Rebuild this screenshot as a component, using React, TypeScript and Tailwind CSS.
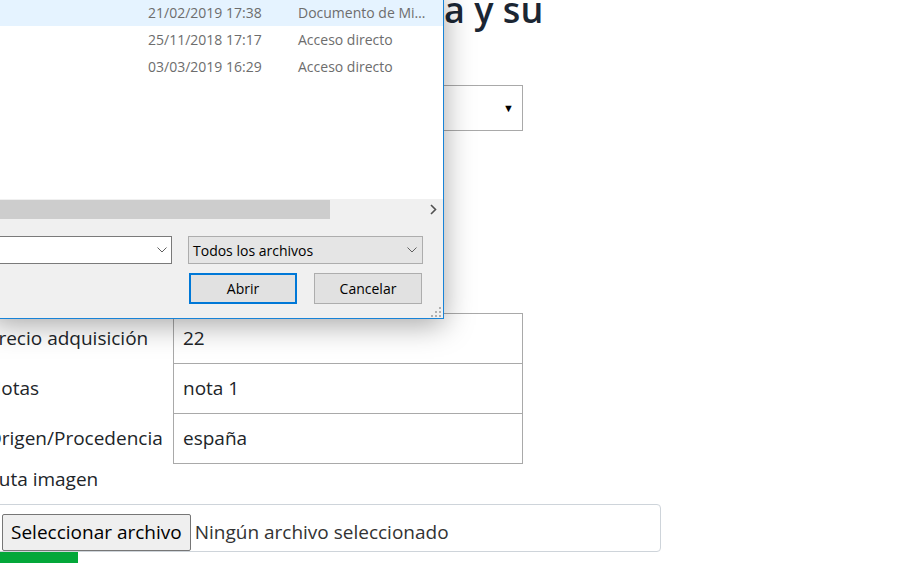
import React from "react";

const rows = [
  { date: "21/02/2019 17:38", type: "Documento de Mi…", selected: true },
  { date: "25/11/2018 17:17", type: "Acceso directo", selected: false },
  { date: "03/03/2019 16:29", type: "Acceso directo", selected: false },
];

const fields = [
  { label: "Precio adquisición", value: "22" },
  { label: "Notas", value: "nota 1" },
  { label: "Origen/Procedencia", value: "españa" },
];

function Chevron({ className }: { className?: string }) {
  return (
    <svg width="10" height="6" viewBox="0 0 10 6" className={className}>
      <path d="M0.5 0.5 L5 5 L9.5 0.5" fill="none" stroke="#606060" strokeWidth="1" />
    </svg>
  );
}

function FileDialog() {
  return (
    <div className="absolute left-[-10px] top-[-10px] flex h-[329px] w-[454px] flex-col border border-[#1883d7] bg-white shadow-[0_6px_28px_rgba(0,0,0,0.35)] font-['Open_Sans',sans-serif] text-[14px]">
      {/* file list */}
      <div className="h-[208px] pt-[8px]">
        {rows.map((r) => (
          <div
            key={r.date}
            className={`flex h-[27px] items-center text-[#6d6d6d] ${r.selected ? "bg-[#e5f3ff]" : ""}`}
          >
            <span className="ml-[157px] w-[150px]">{r.date}</span>
            <span className="whitespace-nowrap">{r.type}</span>
          </div>
        ))}
      </div>

      {/* horizontal scrollbar */}
      <div className="flex h-[20px] items-center bg-[#f0f0f0]">
        <div className="h-[19px] w-[339px] self-end bg-[#cdcdcd]" />
        <div className="flex-1" />
        <svg width="7" height="11" viewBox="0 0 7 11" className="mr-[6px]">
          <path d="M1 1 L5.5 5.5 L1 10" fill="none" stroke="#505050" strokeWidth="1.6" />
        </svg>
      </div>

      {/* bottom panel */}
      <div className="flex flex-1 flex-col bg-[#f0f0f0] pt-[17px]">
        <div className="flex gap-[16px]">
          <div className="flex h-[28px] w-[181px] items-center justify-end border border-[#7a7a7a] bg-white pr-[4px]">
            <Chevron />
          </div>
          <div className="flex h-[28px] w-[235px] items-center justify-between border border-[#adadad] bg-[#e5e5e5] pl-[4px] pr-[5px] text-black">
            <span>Todos los archivos</span>
            <Chevron />
          </div>
        </div>
        <div className="mt-[9px] flex justify-end gap-[17px] pr-[21px]">
          <button className="h-[31px] w-[108px] border-2 border-[#0078d7] bg-[#e1e1e1] text-black">Abrir</button>
          <button className="h-[31px] w-[108px] border border-[#adadad] bg-[#e1e1e1] text-black">Cancelar</button>
        </div>
        <div className="mt-auto flex justify-end pb-[1px] pr-[2px]">
          <svg width="10" height="10" viewBox="0 0 10 10">
            <g fill="#b0b0b0">
              <rect x="8" y="0" width="2" height="2" />
              <rect x="4" y="4" width="2" height="2" />
              <rect x="8" y="4" width="2" height="2" />
              <rect x="0" y="8" width="2" height="2" />
              <rect x="4" y="8" width="2" height="2" />
              <rect x="8" y="8" width="2" height="2" />
            </g>
          </svg>
        </div>
      </div>
    </div>
  );
}

export default function App() {
  return (
    <div className="relative h-[563px] w-[918px] overflow-hidden bg-white font-['Open_Sans',sans-serif] text-[#212529]">
      <div className="ml-[-13px]">
        <h1 className="mt-[-12px] h-[44px] pl-[457px] text-[36px] font-semibold leading-[44px] text-[#1b2633]">
          a y su
        </h1>

        <div className="ml-[186px] mt-[53px] flex h-[46px] w-[350px] items-center justify-end border border-[#a9a9a9] pr-[8px] text-[11px] text-black">
          ▼
        </div>

        <div className="mt-[182px]">
          {fields.map((f, i) => (
            <div key={f.label} className={`flex items-center ${i > 0 ? "-mt-px" : ""}`}>
              <label className="w-[186px] text-[19px]">{f.label}</label>
              <div className="flex h-[51px] w-[350px] items-center border border-[#a9a9a9] px-[9px] text-[19px]">
                {f.value}
              </div>
            </div>
          ))}
        </div>

        <div className="mt-[1px] h-[28px] text-[19px] leading-[28px]">Ruta imagen</div>

        <div className="mt-[11px] flex h-[48px] w-[674px] items-start rounded border border-[#ced4da] pl-[14px] pt-[9px] text-[19px]">
          <button className="h-[37px] rounded-[2px] border border-[#767676] bg-[#efefef] px-[8px] leading-[35px] text-black">
            Seleccionar archivo
          </button>
          <span className="ml-[4px] leading-[37px] text-[#333]">Ningún archivo seleccionado</span>
        </div>

        <div className="h-[40px] w-[91px] bg-[#04a73a]" />
      </div>

      <FileDialog />
    </div>
  );
}
